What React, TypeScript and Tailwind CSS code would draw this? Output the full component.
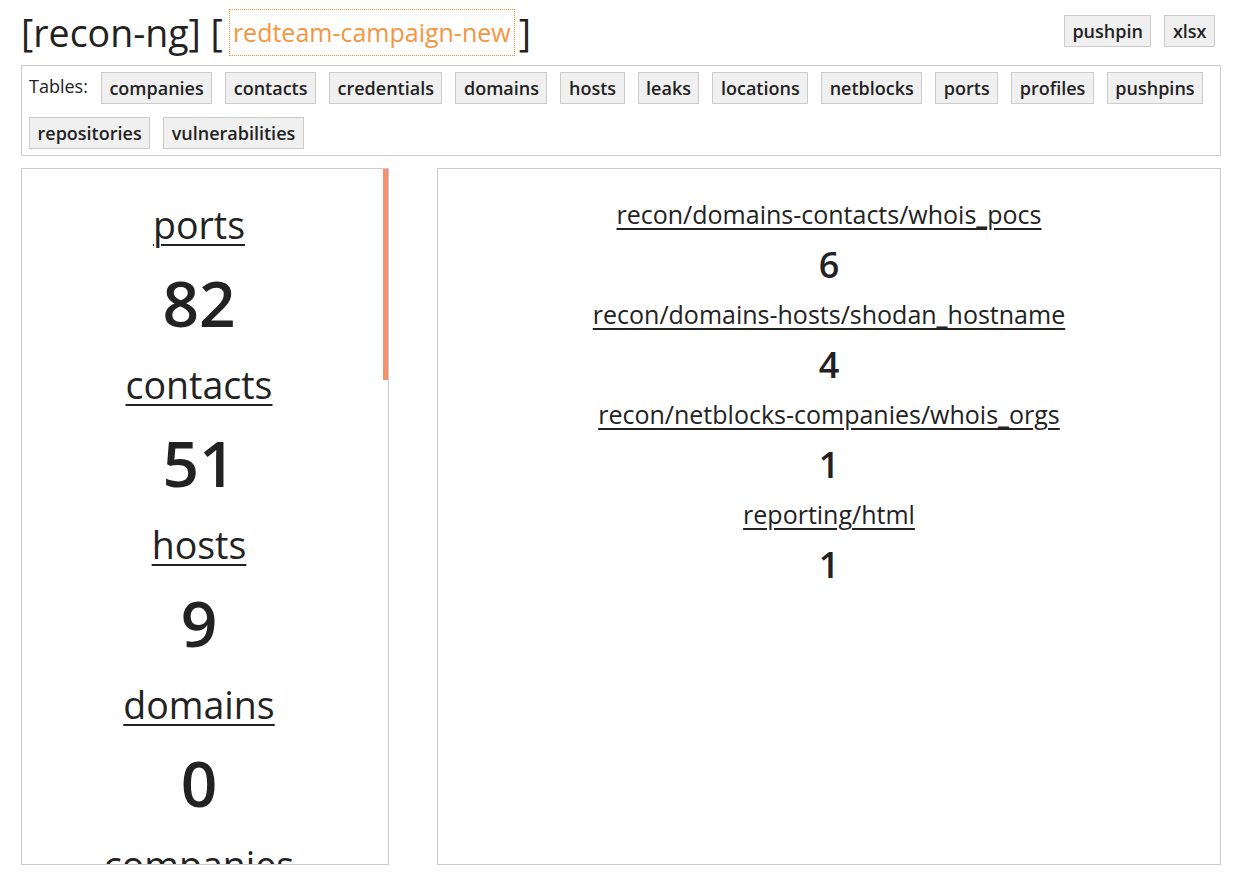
import React from "react";

const tables = [
  "companies",
  "contacts",
  "credentials",
  "domains",
  "hosts",
  "leaks",
  "locations",
  "netblocks",
  "ports",
  "profiles",
  "pushpins",
  "repositories",
  "vulnerabilities",
];

const summary = [
  { name: "ports", count: 82 },
  { name: "contacts", count: 51 },
  { name: "hosts", count: 9 },
  { name: "domains", count: 0 },
  { name: "companies", count: 0 },
  { name: "credentials", count: 0 },
];

const modules = [
  { name: "recon/domains-contacts/whois_pocs", count: 6 },
  { name: "recon/domains-hosts/shodan_hostname", count: 4 },
  { name: "recon/netblocks-companies/whois_orgs", count: 1 },
  { name: "reporting/html", count: 1 },
];

function Btn({ label }: { label: string }) {
  return (
    <button className="h-[32px] px-[7.5px] bg-[#f0f0f0] border border-[#cccccc] text-[18px] font-semibold text-[#222] leading-none">
      {label}
    </button>
  );
}

export default function App() {
  return (
    <main
      className="h-[877px] overflow-hidden bg-white text-[#222] pl-[21px] pr-[14px]"
      style={{ fontFamily: '"Open Sans", "Noto Sans", sans-serif' }}
    >
      {/* header */}
      <div className="h-[65px] flex items-center justify-between">
        <div className="flex items-center text-[37.5px] leading-none">
          <span>[recon-ng] [</span>
          <span className="ml-[6px] mr-[4px] border border-dotted border-[#f0913a] px-[3px] h-[47px] flex items-center text-[25px] text-[#f5953f]">
            redteam-campaign-new
          </span>
          <span>]</span>
        </div>
        <div className="flex gap-[13px] mr-[6px] -mt-[3px]">
          <Btn label="pushpin" />
          <Btn label="xlsx" />
        </div>
      </div>

      {/* tables */}
      <div className="border border-[#cccccc] pt-[6px] pb-[6px] pl-[7px] pr-[7px] flex flex-wrap items-center gap-x-[13px] gap-y-[13px]">
        <span className="text-[18px] text-[#222] -mt-[3px]">Tables:</span>
        {tables.map((t) => (
          <Btn key={t} label={t} />
        ))}
      </div>

      {/* panels */}
      <div className="flex mt-[12px] h-[697px]">
        <div className="relative w-[368px] border border-[#cccccc] overflow-hidden">
          <div className="pt-[16px] pr-[12px] flex flex-col items-center">
            {summary.map((s) => (
              <React.Fragment key={s.name}>
                <div className="h-[80px] flex items-center">
                  <a href="#" className="text-[37.5px] underline underline-offset-[5px] decoration-[2px]">
                    {s.name}
                  </a>
                </div>
                <div className="h-[80px] flex items-center text-[64px] font-semibold leading-none -mt-[2px] mb-[2px]">
                  {s.count}
                </div>
              </React.Fragment>
            ))}
          </div>
          <div className="absolute right-0 top-0 w-[5px] h-[211px] bg-[#f4926c]" />
        </div>
        <div className="ml-[48px] flex-1 border border-[#cccccc]">
          <div className="pt-[21px] flex flex-col items-center">
            {modules.map((m) => (
              <React.Fragment key={m.name}>
                <div className="h-[50px] flex items-center">
                  <a href="#" className="text-[25px] underline underline-offset-[4px]">
                    {m.name}
                  </a>
                </div>
                <div className="h-[50px] flex items-center text-[36px] font-semibold leading-none">
                  {m.count}
                </div>
              </React.Fragment>
            ))}
          </div>
        </div>
      </div>
    </main>
  );
}
